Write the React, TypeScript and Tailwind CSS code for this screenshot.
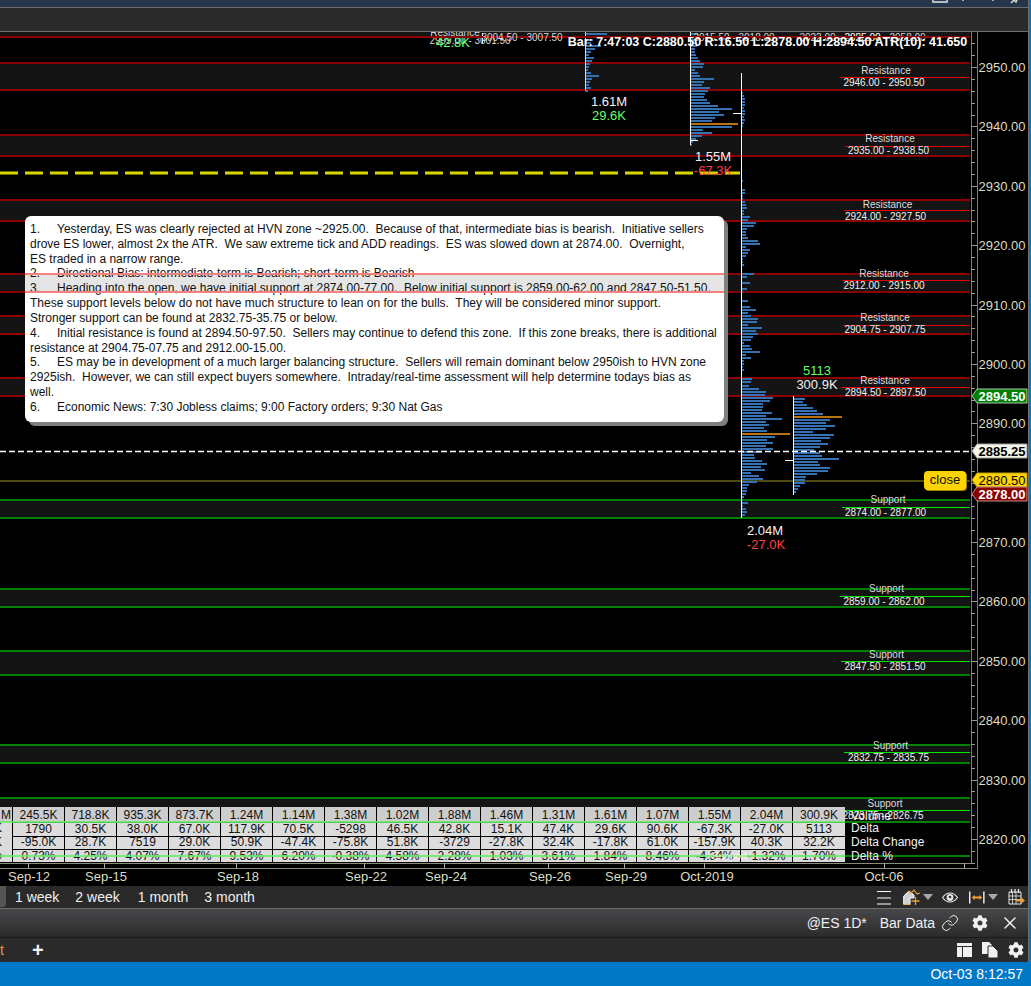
import { Fragment } from "react";
import { Link, X } from "lucide-react";
import { FaCog } from "react-icons/fa";

const priceY = (p: number) => 67 + (2950 - p) * 5.938;

type Zone = {
  top: number;
  bottom: number;
  mid: number;
  from: number;
  labelY: number;
  rangeY: number;
  cx: number;
  rangeCx: number;
  range: string;
};

const resistance: Zone[] = [
  { top: 63, bottom: 90, mid: 77, from: 840, labelY: 71, rangeY: 83, cx: 886, rangeCx: 884, range: "2946.00 - 2950.50" },
  { top: 135, bottom: 156, mid: 146, from: 845, labelY: 139, rangeY: 151, cx: 890, rangeCx: 888.5, range: "2935.00 - 2938.50" },
  { top: 200, bottom: 221, mid: 210, from: 844, labelY: 205, rangeY: 217, cx: 887.5, rangeCx: 885.5, range: "2924.00 - 2927.50" },
  { top: 274, bottom: 292, mid: 280, from: 842, labelY: 274, rangeY: 286, cx: 884, rangeCx: 884, range: "2912.00 - 2915.00" },
  { top: 316, bottom: 334, mid: 325, from: 843, labelY: 318, rangeY: 330, cx: 885, rangeCx: 885, range: "2904.75 - 2907.75" },
  { top: 378, bottom: 396, mid: 387, from: 841, labelY: 381, rangeY: 393, cx: 885, rangeCx: 885.5, range: "2894.50 - 2897.50" },
];

const support: Zone[] = [
  { top: 500, bottom: 518, mid: 507, from: 842, labelY: 500, rangeY: 513, cx: 888, rangeCx: 885.5, range: "2874.00 - 2877.00" },
  { top: 589, bottom: 607, mid: 596, from: 840, labelY: 589, rangeY: 602, cx: 886.5, rangeCx: 884, range: "2859.00 - 2862.00" },
  { top: 651, bottom: 675, mid: 661, from: 841, labelY: 655, rangeY: 667, cx: 886.5, rangeCx: 885, range: "2847.50 - 2851.50" },
  { top: 745, bottom: 763, mid: 752, from: 844, labelY: 746, rangeY: 758, cx: 890.5, rangeCx: 888.5, range: "2832.75 - 2835.75" },
  { top: 798, bottom: 822, mid: 810, from: 839, labelY: 804, rangeY: 816, cx: 885, rangeCx: 883, range: "2823.75 - 2826.75" },
];

// bar lengths of the volume profiles, one every 3px
const profileA = [22, 12, 8, 6, 16, 10, 6, 4, 9, 7, 5, 4, 3, 6, 14, 7, 5, 4, 6, 3];
const profileB = [
  8, 8, 6, 7, 7, 5, 5, 6, 8, 10, 14, 13, 5, 8, 10, 24, 14, 12, 20, 18, 15, 14, 17, 20, 28, 42, 29, 34, 25, 22, 48, 42,
  13, 22, 12, 6, 3, 2,
];
const profileCTop = [2, 3, 4, 4, 4, 3, 4, 4, 3, 4, 3, 2];
const profileCMid = [
  2, 1, 1, 4, 4, 2, 2, 4, 5, 6, 3, 3, 9, 7, 15, 13, 6, 5, 5, 7, 17, 19, 5, 9, 7, 5, 2, 2, 3, 0, 1, 13, 6, 0, 9, 1, 6, 2,
  0, 0, 7, 1, 9, 15, 7, 10, 17, 16, 7, 21, 15, 17, 12, 10, 3, 9, 11, 19, 5, 10, 3, 3, 2, 3, 0, 0, 11, 10,
];
const profileCLow = [
  8, 18, 25, 24, 32, 29, 22, 22, 21, 31, 25, 41, 25, 28, 23, 26, 49, 34, 26, 32, 25, 32, 21, 13, 14, 21, 26, 20, 24, 10,
  18, 22, 16, 8, 6, 6, 5, 3, 2, 7, 2, 5, 6, 4,
];
const profileD = [
  12, 10, 14, 20, 24, 30, 49, 37, 33, 42, 33, 20, 41, 37, 28, 35, 27, 21, 27, 29, 46, 25, 27, 37, 35, 24, 13, 12, 12, 7,
  5, 3,
];

const dates: [string, number, number][] = [
  ["Sep-12", 29, 28],
  ["Sep-15", 106, 104],
  ["Sep-18", 238, 236],
  ["Sep-22", 366, 364],
  ["Sep-24", 446, 444],
  ["Sep-26", 550, 548],
  ["Sep-29", 626, 624],
  ["Oct-2019", 707, 704],
  ["Oct-06", 884, 884],
];

const rows = [
  ["245.5K", "718.8K", "935.3K", "873.7K", "1.24M", "1.14M", "1.38M", "1.02M", "1.88M", "1.46M", "1.31M", "1.61M", "1.07M", "1.55M", "2.04M", "300.9K"],
  ["1790", "30.5K", "38.0K", "67.0K", "117.9K", "70.5K", "-5298", "46.5K", "42.8K", "15.1K", "47.4K", "29.6K", "90.6K", "-67.3K", "-27.0K", "5113"],
  ["-95.0K", "28.7K", "7519", "29.0K", "50.9K", "-47.4K", "-75.8K", "51.8K", "-3729", "-27.8K", "32.4K", "-17.8K", "61.0K", "-157.9K", "40.3K", "32.2K"],
  ["0.73%", "4.25%", "4.07%", "7.67%", "9.53%", "6.20%", "-0.38%", "4.58%", "2.28%", "1.03%", "3.61%", "1.84%", "8.46%", "-4.34%", "-1.32%", "1.70%"],
];
const stubs = ["M", "K", "K", "%"];

const Profile = ({ x, y, bars, poc }: { x: number; y: number; bars: number[]; poc?: number }) => (
  <>
    {bars.map((len, i) =>
      len > 0 ? (
        <rect
          key={i}
          x={x}
          y={y + i * 3}
          width={len}
          height={2}
          fill={y + i * 3 === poc ? "#b8720f" : "#3570b0"}
        />
      ) : null,
    )}
  </>
);

const ZoneLines = ({ zone, dark, bright }: { zone: Zone; dark: string; bright: string }) => (
  <>
    <rect x={0} y={zone.top} width={970} height={zone.bottom - zone.top} fill="#141414" />
    <rect x={0} y={zone.top - 1} width={970} height={2} fill={dark} />
    <rect x={0} y={zone.bottom - 1} width={970} height={2} fill={dark} />
    <rect x={zone.from} y={zone.mid} width={970 - zone.from} height={1} fill={bright} />
  </>
);

const ZoneText = ({ zone, title }: { zone: Zone; title: string }) => (
  <>
    <text x={zone.cx} y={zone.labelY + 2.5} textAnchor="middle" fontSize={10} fill="#dcdcdc">
      {title}
    </text>
    <text x={zone.rangeCx} y={zone.rangeY + 2.5} textAnchor="middle" fontSize={10} fill="#f2f2f2">
      {zone.range}
    </text>
  </>
);

const PriceTag = ({
  y,
  text,
  bg,
  fg,
  edge,
  bold = true,
}: {
  y: number;
  text: string;
  bg: string;
  fg: string;
  edge: string;
  bold?: boolean;
}) => (
  <>
    <polygon
      points={`972,${y} 977,${y - 7} 1027,${y - 7} 1027,${y + 7} 977,${y + 7}`}
      fill={bg}
      stroke={edge}
      strokeWidth={1}
    />
    <text x={1002} y={y + 5} textAnchor="middle" fontSize={13} fontWeight={bold ? 700 : 400} fill={fg}>
      {text}
    </text>
  </>
);

const ChartDrawing = () => {
  const ticks: number[] = [];
  for (let p = 2956; p >= 2816; p -= 2) ticks.push(p);
  const labels: number[] = [];
  for (let p = 2950; p >= 2820; p -= 10) if (p !== 2880) labels.push(p);

  return (
    <svg className="absolute inset-0" width={1028} height={854} viewBox="0 32 1028 854">
      <rect x={0} y={32} width={970} height={5} fill="#141414" />
      {resistance.map((z) => (
        <ZoneLines key={z.range} zone={z} dark="#8b0000" bright="#e80000" />
      ))}
      {support.map((z) => (
        <ZoneLines key={z.range} zone={z} dark="#008000" bright="#00e800" />
      ))}
      <rect x={0} y={855} width={970} height={2} fill="#008000" />

      {/* level lines */}
      <line x1={0} x2={740} y1={173} y2={173} stroke="#d8d800" strokeWidth={3} strokeDasharray="18 7" />
      <rect x={0} y={480} width={970} height={2} fill="#4a4a10" />

      {/* profiles */}
      <Profile x={585} y={33} bars={profileA} />
      <Profile x={690} y={33} bars={profileB} poc={123} />
      <Profile x={741} y={92} bars={profileCTop} />
      <Profile x={741} y={180} bars={profileCMid} />
      <Profile x={741} y={385} bars={profileCLow} poc={433} />
      <Profile x={793} y={398} bars={profileD} poc={416} />
      <rect x={585} y={32} width={1} height={58} fill="#cfd8e6" />
      <rect x={690} y={32} width={1} height={113} fill="#ffffff" />
      <rect x={741} y={73} width={1} height={445} fill="#ffffff" />
      <rect x={793} y={396} width={1} height={99} fill="#ffffff" />
      <rect x={690} y={140} width={8} height={1} fill="#ffffff" />
      <rect x={733} y={113} width={8} height={1} fill="#ffffff" />
      <rect x={785} y={460} width={8} height={1} fill="#ffffff" />
      <rect x={482} y={33} width={1} height={11} fill="#ffffff" />
      <line x1={0} x2={970} y1={451.5} y2={451.5} stroke="#ffffff" strokeWidth={1.3} strokeDasharray="6 3" />

      {/* clipped labels of zones above the visible range */}
      <g fontSize={10} fill="#d8d8d8">
        <text x={455} y={36} textAnchor="middle">Resistance</text>
        <text x={470} y={44} textAnchor="middle">2999.00 - 3001.50</text>
        <text x={734} y={41} textAnchor="middle">3015.50 - 3018.00</text>
        <text x={840} y={41} textAnchor="middle">3022.00 - 3025.00</text>
        <text x={885} y={41} textAnchor="middle">2955.00 - 2958.00</text>
      </g>
      <rect x={0} y={36} width={970} height={2} fill="#8b0000" />
      <text x={522} y={41} textAnchor="middle" fontSize={10} fill="#d8d8d8">3004.50 - 3007.50</text>
      <text x={453} y={47} textAnchor="middle" fontSize={13} fill="#66ff66">42.8K</text>
      <text x={767.5} y={45.5} textAnchor="middle" fontSize={12.5} fontWeight={700} fill="#ffffff">
        Bar: 7:47:03 C:2880.50 R:16.50 L:2878.00 H:2894.50 ATR(10): 41.650
      </text>

      {/* zone captions */}
      {resistance.map((z) => (
        <ZoneText key={z.range} zone={z} title="Resistance" />
      ))}
      {support.map((z) => (
        <ZoneText key={z.range} zone={z} title="Support" />
      ))}

      {/* bar stats */}
      <g fontSize={13} textAnchor="middle">
        <text x={609} y={106} fill="#f2f2f2">1.61M</text>
        <text x={609} y={120} fill="#66ff66">29.6K</text>
        <text x={713} y={161} fill="#f2f2f2">1.55M</text>
        <text x={713} y={175} fill="#ff4040">-67.3K</text>
        <text x={817} y={375} fill="#66ff66">5113</text>
        <text x={817} y={389} fill="#f2f2f2">300.9K</text>
        <text x={765} y={535} fill="#f2f2f2">2.04M</text>
        <text x={766} y={549} fill="#ff4040">-27.0K</text>
      </g>

      {/* right side table titles */}
      <g fontSize={12} fill="#f2f2f2">
        <text x={851} y={820}>Volume</text>
        <text x={851} y={832}>Delta</text>
        <text x={851} y={846}>Delta Change</text>
        <text x={851} y={860}>Delta %</text>
      </g>

      {/* price axis */}
      <rect x={971} y={32} width={1} height={832} fill="#7a7a7a" />
      <rect x={977} y={32} width={1} height={837} fill="#7a7a7a" />
      <rect x={0} y={863} width={971} height={1} fill="#8a8a7a" />
      <rect x={0} y={868} width={977} height={1} fill="#8a8a7a" />
      {ticks.map((p) => (
        <rect key={p} x={971} y={Math.round(priceY(p))} width={p % 10 === 0 ? 6 : 4} height={1} fill="#9a9a8a" />
      ))}
      {labels.map((p) => (
        <text key={p} x={1002} y={Math.round(priceY(p)) + 5} textAnchor="middle" fontSize={13} fill="#dcdcc0">
          {p}.00
        </text>
      ))}

      {/* date axis */}
      {dates.map(([label, cx, tick]) => (
        <g key={label}>
          <rect x={tick} y={863} width={1} height={5} fill="#b0b0a0" />
          <text x={cx} y={881} textAnchor="middle" fontSize={13} fill="#dcdcc0">
            {label}
          </text>
        </g>
      ))}
      <rect x={964} y={863} width={1} height={5} fill="#b0b0a0" />

      <PriceTag y={396} text="2894.50" bg="#008000" fg="#ffffff" edge="#b0c8b0" />
      <PriceTag y={451} text="2885.25" bg="#f5f5e8" fg="#000000" edge="#a0a0a0" />
      <PriceTag y={480} text="2880.50" bg="#ffd400" fg="#000000" edge="#b89a00" bold={false} />
      <PriceTag y={494} text="2878.00" bg="#8b0000" fg="#ffffff" edge="#c09090" />
    </svg>
  );
};

const DataTable = () => (
  <div className="absolute left-0 top-[775px] w-[845px]">
    <div className="grid grid-cols-[13px_repeat(16,52px)] grid-rows-[15px_13.5px_13.5px_13px] text-[12px] leading-none text-[#111]">
      {rows.map((row, r) => (
        <Fragment key={r}>
          <div
            className={`flex items-center justify-end overflow-hidden border-r border-black ${r === 0 ? "bg-[#cdcdcd] pr-px" : "bg-[#dcdcdc] pb-px pr-[10px]"}`}
          >
            {stubs[r]}
          </div>
          {row.map((v, c) => (
            <div
              key={c}
              className={`flex items-center justify-center border-black ${r === 0 ? "bg-[#cdcdcd]" : "border-t bg-[#dcdcdc] pb-px"} ${c === 15 ? "" : "border-r"}`}
            >
              {v}
            </div>
          ))}
        </Fragment>
      ))}
    </div>
    <div className="absolute inset-x-0 top-[14px] h-[2px] bg-[#66ee66]/85" />
    <div className="absolute inset-x-0 top-[48px] h-[2px] bg-[#66ee66]/85" />
    <span className="absolute left-[712px] top-[42px] text-[10px] text-white/80">Support</span>
  </div>
);

const numberCell = "inline-block w-[27px]";

const Notes = () => (
  <div className="absolute left-[25px] top-[184px] h-[206px] w-[699px] whitespace-pre rounded-[6px] bg-white px-[5px] pt-[6px] text-[12px] leading-[14.83px] text-[#111] shadow-[4px_4px_0_#808080]">
    <div className="absolute inset-x-0 top-[57px] h-[20px] bg-black/10" />
    <div className="relative">
      <div><span className={numberCell}>1.</span>Yesterday, ES was clearly rejected at HVN zone ~2925.00.  Because of that, intermediate bias is bearish.  Initiative sellers</div>
      <div>drove ES lower, almost 2x the ATR.  We saw extreme tick and ADD readings.  ES was slowed down at 2874.00.  Overnight,</div>
      <div>ES traded in a narrow range.</div>
      <div><span className={numberCell}>2.</span>Directional Bias: intermediate-term is Bearish; short-term is Bearish</div>
      <div><span className={numberCell}>3.</span>Heading into the open, we have initial support at 2874.00-77.00.  Below initial support is 2859.00-62.00 and 2847.50-51.50.</div>
      <div>These support levels below do not have much structure to lean on for the bulls.  They will be considered minor support.</div>
      <div>Stronger support can be found at 2832.75-35.75 or below.</div>
      <div><span className={numberCell}>4.</span>Initial resistance is found at 2894.50-97.50.  Sellers may continue to defend this zone.  If this zone breaks, there is additional</div>
      <div>resistance at 2904.75-07.75 and 2912.00-15.00.</div>
      <div><span className={numberCell}>5.</span>ES may be in development of a much larger balancing structure.  Sellers will remain dominant below 2950ish to HVN zone</div>
      <div>2925ish.  However, we can still expect buyers somewhere.  Intraday/real-time assessment will help determine todays bias as</div>
      <div>well.</div>
      <div><span className={numberCell}>6.</span>Economic News: 7:30 Jobless claims; 9:00 Factory orders; 9:30 Nat Gas</div>
    </div>
    <div className="absolute inset-x-0 top-[57px] h-[20px] border-y-2 border-[#f58080]" />
  </div>
);

const Caret = () => (
  <svg width="10" height="6" viewBox="0 0 10 6">
    <path d="M0 0h10L5 6z" fill="#a8a8a8" />
  </svg>
);

const ChartToolbarIcons = () => (
  <div className="ml-auto mr-[3px] flex items-center">
    <svg width="14" height="15" viewBox="0 0 14 15" className="mr-[12px]">
      <path d="M0 1.500h14M0 8h14M0 14h14" stroke="#fff" strokeWidth="1.200" />
    </svg>
    <svg width="17" height="16" viewBox="0 0 17 16" className="mr-[3px]">
      <path d="M.7 15.300V7L6 2l5 4v3H7v6.300z" fill="#d0d0d0" stroke="#fff" strokeWidth="1" />
      <path d="M.7 15.300h7M5 2.500 8 4l3-3 3 4 3-1" fill="none" stroke="#e8a03c" strokeWidth="1.100" />
      <path d="M12.500 8v8M8.500 12h8" stroke="#e8a03c" strokeWidth="1.300" />
    </svg>
    <Caret />
    <svg width="16" height="11" viewBox="0 0 17 11" className="ml-[9px] mr-[11px]">
      <path d="M.5 5.500C3 2 5.500.7 8.500.7s5.500 1.300 8 4.800c-2.500 3.500-5 4.800-8 4.800S3 9 .5 5.500z" fill="none" stroke="#e8e8e8" strokeWidth="1.200" />
      <circle cx="8.500" cy="5.500" r="3.600" fill="#e8e8e8" />
      <circle cx="8.500" cy="5" r="1.400" fill="#333" />
    </svg>
    <svg width="16" height="13" viewBox="0 0 17 13" className="mr-[3px]">
      <path d="M.8 0v13M15.800 0v13" stroke="#fff" strokeWidth="1.400" />
      <path d="M3 6.500 6 3.800v1.700h5V3.800l3 2.700-3 2.700V7.500H6v1.700z" fill="#f0a030" />
    </svg>
    <Caret />
    <svg width="17" height="16" viewBox="0 0 17 16" className="ml-[10px]">
      <path d="M1 3h12v12H1z" fill="none" stroke="#e8e8e8" />
      <path d="M3.500 0v4M7 0v4M10.500 0v4" stroke="#e8e8e8" strokeWidth="1.300" />
      <path d="M1 7h12M1 10.500h12M4.500 3v12M8 3v12" stroke="#e8e8e8" strokeWidth=".8" />
      <path d="M8 10.500h5V8l4 3.500-4 3.500v-2.500H8z" fill="#f0a030" />
    </svg>
  </div>
);

const TabBarIcons = () => (
  <div className="ml-auto mr-[4px] flex items-center">
    <svg width="15" height="14" viewBox="0 0 15 14" className="mr-[10px]">
      <path d="M0 0h15v3H0zM0 4h5v10H0zM6 4h9v10H6z" fill="#f0f0f0" />
    </svg>
    <svg width="16" height="16" viewBox="0 0 16 16" className="mr-[10px]">
      <path d="M0 0h7l3 3v9H0z" fill="#f0f0f0" />
      <path d="M6 4h5l5 5v7H6z" fill="#f0f0f0" stroke="#2a2a2a" />
    </svg>
    <FaCog className="size-[16px] text-[#f0f0f0]" />
  </div>
);

export default function App() {
  return (
    <div className="flex h-[986px] w-[1031px] flex-col overflow-hidden bg-[#0078c8] font-['Liberation_Sans',Arial,sans-serif]">
      <div className="w-[1029px] flex-1 border-r border-[#6e6e6e]">
        <div className="relative h-[8px] border-b border-[#6e6e6e] bg-[#25364c]">
          <svg className="absolute left-[925px] top-0" width="95" height="7" viewBox="0 0 95 7">
            <path d="M7 2h16M7 0h2M21 0h2" stroke="#e8e8e8" strokeWidth="1.500" fill="none" />
            <path d="M37 0h2M67 0h2M86 3l3-3 2 2 1-2" stroke="#d8d8d8" strokeWidth="1.500" fill="none" />
          </svg>
        </div>
        <div className="h-[24px] border-b border-[#6e6e6e] bg-[#2a2a2a]" />

        <div className="relative h-[854px] overflow-hidden bg-black">
          <ChartDrawing />
          <Notes />
          <DataTable />
          <div className="absolute left-[924px] top-[439px] flex h-[19px] w-[42px] items-center justify-center rounded-[4px] bg-[#ffd400] pb-px text-[13px] text-[#111] shadow-[1px_1px_0_#a08600]">
            close
          </div>
        </div>

        <div className="flex h-[23px] items-center border-b border-[#6e6e6e] bg-[#2a2a2a] text-[14px] text-[#f0f0f0]">
          <div className="mb-[1px] h-[21px] w-[6px] rounded-br-[3px] bg-[#555]" />
          <span className="ml-[9px]">1 week</span>
          <span className="ml-[16px]">2 week</span>
          <span className="ml-[18px]">1 month</span>
          <span className="ml-[16px]">3 month</span>
          <ChartToolbarIcons />
        </div>

        <div className="flex h-[29px] items-center border-b border-[#1a1a1a] bg-gradient-to-b from-[#48484b] to-[#2b2b2b] text-[14px] text-[#f0f0f0]">
          <span className="ml-auto">@ES 1D*</span>
          <span className="ml-[13px]">Bar Data</span>
          <Link className="ml-[6px] size-[18px]" strokeWidth={1.3} />
          <FaCog className="ml-[13px] size-[16px]" />
          <X className="ml-[12px] mr-[8px] size-[20px]" strokeWidth={1.8} />
        </div>

        <div className="flex h-[24px] items-center bg-[#2a2a2a] text-[14px] text-[#f0f0f0]">
          <span className="text-[#e8943c]">t</span>
          <span className="ml-[28px] text-[20px] font-bold leading-none">+</span>
          <TabBarIcons />
        </div>
      </div>

      <div className="flex h-[24px] items-center justify-end bg-[#0078c8] pr-[8px] text-[14px] text-white">
        Oct-03 8:12:57
      </div>
    </div>
  );
}
